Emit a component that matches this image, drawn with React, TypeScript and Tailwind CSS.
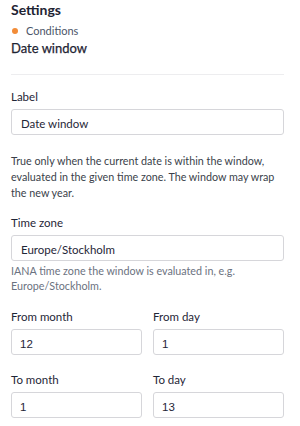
export default function App() {
  const label = 'block text-[11.5px] leading-4 text-[#1f2637]';
  const input =
    'mt-1 block h-[26px] w-full rounded-[3px] border border-[#d6d6da] bg-white px-[9px] pt-[2px] text-[11.5px] text-[#1f2637] outline-none';
  const numInput =
    'mt-1 block h-[26px] w-full rounded-[3px] border border-[#d6d6da] bg-white px-[8px] pt-[4px] text-[11.5px] text-[#1f2637] outline-none [font-family:"Liberation_Sans",Arial,sans-serif]';

  return (
    <div className="min-h-screen bg-white pl-[11px] pr-[16px] [font-family:Lato,'Noto_Sans',sans-serif]">
      <div className="text-[14px] font-bold leading-5 text-[#1e2433]">Settings</div>
      <div className="mt-[3px] flex h-4 items-center gap-[8px] text-[11px] leading-4 text-[#4b5568]">
        <span className="mb-[1px] ml-[1px] size-[6px] rounded-full bg-[#f28c38]" />
        <span>Conditions</span>
      </div>
      <div className="text-[13px] leading-[18px] text-[#1e2433] [-webkit-text-stroke:0.25px_#1e2433]">Date window</div>
      <div className="mt-[17px] h-px bg-[#ededef]" />

      <div className="mt-[14px]">
        <label className={label}>Label</label>
        <input className={input} defaultValue="Date window" />
      </div>

      <p className="mt-[17.5px] text-[10.75px] leading-4 text-[#3a3f4a]">
        True only when the current date is within the window, evaluated in the given time zone. The window may
        wrap the new year.
      </p>

      <div className="mt-[14.5px]">
        <label className={label}>Time zone</label>
        <input className={input} defaultValue="Europe/Stockholm" />
        <p className="mt-[2px] text-[10.75px] leading-[15px] text-[#6b7280]">
          IANA time zone the window is evaluated in, e.g. Europe/Stockholm.
        </p>
      </div>

      <div className="mt-[16px] grid grid-cols-2 gap-x-[11px] gap-y-[17px]">
        <div>
          <label className={label}>From month</label>
          <input className={numInput} type="number" defaultValue={12} />
        </div>
        <div>
          <label className={label}>From day</label>
          <input className={numInput} type="number" defaultValue={1} />
        </div>
        <div>
          <label className={label}>To month</label>
          <input className={numInput} type="number" defaultValue={1} />
        </div>
        <div>
          <label className={label}>To day</label>
          <input className={numInput} type="number" defaultValue={13} />
        </div>
      </div>
    </div>
  );
}
